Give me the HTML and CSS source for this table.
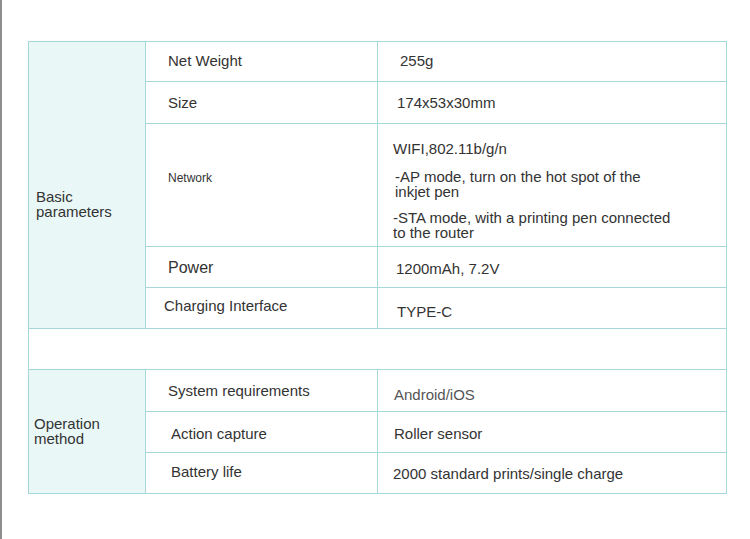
FILE: index.html
```html
<!DOCTYPE html>
<html>
<head>
<meta charset="utf-8">
<link rel="stylesheet" href="styles.css">
</head>
<body>
<div class="page">
  <div class="spec">
    <div class="group group-basic"><div class="group-text">Basic<br>parameters</div></div>
    <div class="cell key k22 up1">Net Weight</div>
    <div class="cell val v22 up1">255g</div>

    <div class="cell key k22">Size</div>
    <div class="cell val v19">174x53x30mm</div>

    <div class="cell key k22 small up7">Network</div>
    <div class="cell val net">
      <p class="p-wifi">WIFI,802.11b/g/n</p>
      <p class="p-ap">-AP mode, turn on the hot spot of the<br>inkjet pen</p>
      <p class="p-sta">-STA mode, with a printing pen connected<br>to the router</p>
    </div>

    <div class="cell key k22 big">Power</div>
    <div class="cell val v18 down2">1200mAh, 7.2V</div>

    <div class="cell key k18 up3">Charging Interface</div>
    <div class="cell val v19 down4">TYPE-C</div>

    <div class="cell blank"></div>

    <div class="group group-op"><div class="group-text">Operation<br>method</div></div>
    <div class="cell key k22">System requirements</div>
    <div class="cell val v16 down4 grey">Android/iOS</div>

    <div class="cell key k25 down2">Action capture</div>
    <div class="cell val v16 down2">Roller sensor</div>

    <div class="cell key k25 up2">Battery life</div>
    <div class="cell val v15">2000 standard prints/single charge</div>
  </div>
</div>
</body>
</html>
```

FILE: styles.css
```css
* { box-sizing: border-box; }
html, body { margin: 0; padding: 0; background: #fff; }
body {
  font-family: "Liberation Sans", Arial, sans-serif;
  color: #333;
  font-size: 15px;
}
.page {
  height: 539px;
  border-left: 2px solid #8e8e8e;
  padding: 41px 0 0 26px;
}
.spec {
  width: 699px;
  display: grid;
  grid-template-columns: 117px 232px 349px;
  grid-template-rows: 40px 42px 123px 41px 41px 41px 42px 41px 41px;
  border-top: 1px solid #a6d8da;
  border-left: 1px solid #a6d8da;
}
.cell, .group {
  border-right: 1px solid #a6d8da;
  border-bottom: 1px solid #a6d8da;
}
.cell {
  display: flex;
  align-items: center;
  line-height: 15px;
  white-space: nowrap;
}
.group {
  background: #eaf7f7;
  display: flex;
  align-items: center;
  line-height: 15px;
}
.group-basic { grid-row: 1 / 6; grid-column: 1; padding: 38px 0 0 7px; }
.group-op { grid-row: 7 / 10; grid-column: 1; padding: 0 0 2px 5px; }
.blank { grid-column: 1 / 4; }

.small { font-size: 12px; }
.big { font-size: 16px; }
.grey { color: #555; }

.k18 { padding-left: 18px; }
.k22 { padding-left: 22px; }
.k25 { padding-left: 25px; }
.v15 { padding-left: 15px; }
.v16 { padding-left: 16px; }
.v18 { padding-left: 18px; }
.v19 { padding-left: 19px; }
.v22 { padding-left: 22px; }

.up1 { padding-bottom: 2px; }
.up2 { padding-bottom: 4px; }
.up3 { padding-bottom: 6px; }
.up7 { padding-bottom: 14px; }
.down2 { padding-top: 3px; }
.down4 { padding-top: 7px; }

.net {
  display: block;
  padding-top: 17px;
}
.net p { margin: 0; line-height: 15px; }
.p-wifi { padding-left: 15px; }
.p-ap { padding-left: 17px; margin-top: 13px !important; }
.p-sta { padding-left: 15px; margin-top: 11px !important; }
```
